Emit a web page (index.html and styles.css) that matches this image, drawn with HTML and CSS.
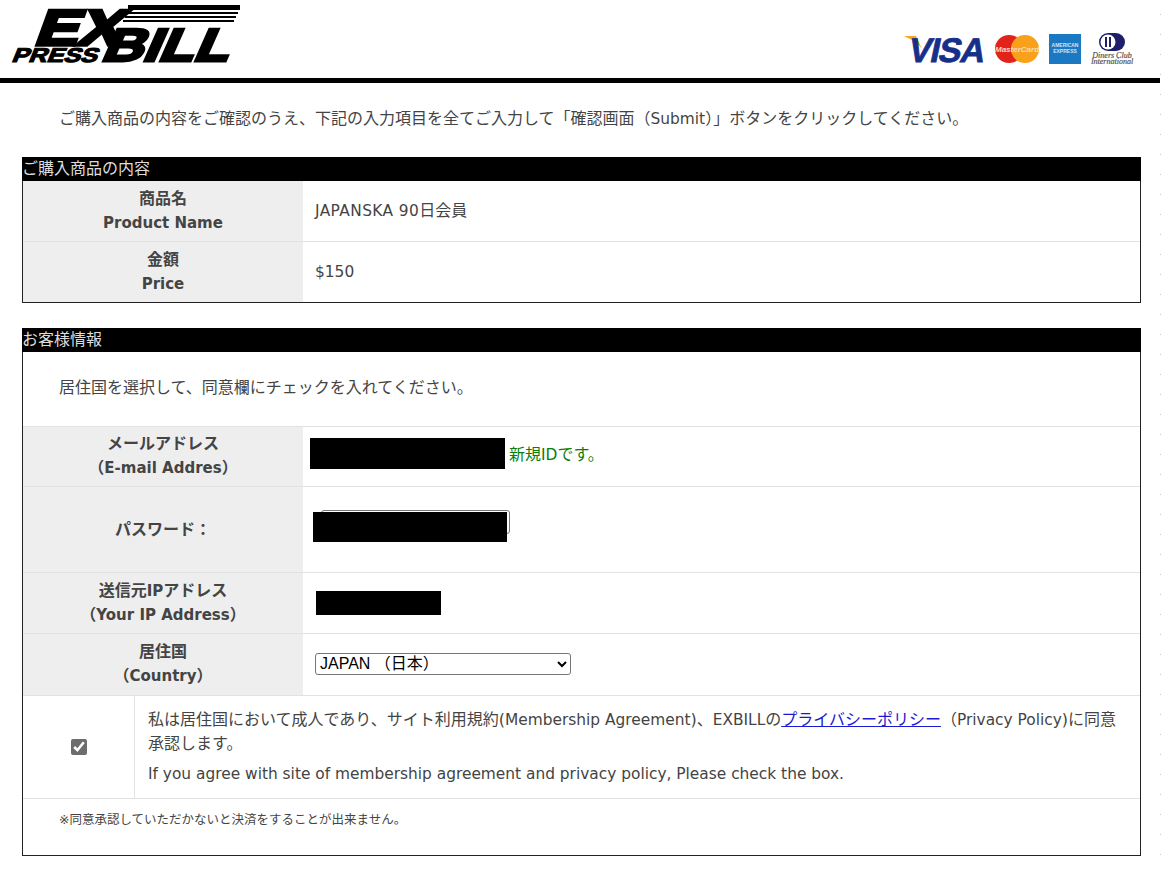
FILE: index.html

```html
<!DOCTYPE html>
<html lang="ja">
<head>
  <meta charset="UTF-8">
  <meta name="viewport" content="width=device-width, initial-scale=1.0"/>
  <title>EXPRESSBILL</title>
  <link rel="stylesheet" href="styles.css">
</head>
<body>
  <header class="header">
    <svg class="logo" width="250" height="70" viewBox="0 0 250 70">
      <g fill="#000">
        <rect x="128" y="5" width="112" height="5"/>
        <rect x="127" y="12" width="111" height="2"/>
        <rect x="125" y="16" width="111" height="2"/>
        <rect x="123" y="20" width="111" height="2"/>
      </g>
      <text class="logo-ex" transform="translate(33 45) skewX(-20) scale(1.3 1)">EX</text>
      <text class="logo-press" transform="translate(11 62) skewX(-22) scale(1.26 1)">PRESS</text>
      <text class="logo-bill" transform="translate(100 61) skewX(-24) scale(1.24 1)">BILL</text>
    </svg>
    <div class="cards">
      <svg class="card-visa" width="80" height="30" viewBox="0 0 80 30">
        <path d="M0 2 H12 L18 15 C14 9 7 5 0 2Z" fill="#f2a51f"/>
        <text class="visa" transform="translate(3 28) skewX(-12)">VISA</text>
      </svg>
      <svg width="44" height="28" viewBox="0 0 44 28">
        <circle cx="14" cy="14" r="14" fill="#e2231a"/>
        <circle cx="30" cy="14" r="14" fill="#f9a11b"/>
        <text class="mc" x="22" y="17">MasterCard</text>
      </svg>
      <svg width="32" height="30" viewBox="0 0 32 30">
        <rect width="32" height="30" fill="#1b78c2"/>
        <text class="amex" x="16" y="13">AMERICAN</text>
        <text class="amex" x="16" y="19">EXPRESS</text>
      </svg>
      <svg class="card-diners" width="42" height="32" viewBox="0 0 42 32">
        <path d="M17 0 H25 A9 9 0 0 1 25 18 H17 A9 9 0 0 1 17 0Z" fill="#1d1f6b"/>
        <circle cx="17" cy="9" r="7.5" fill="#fff"/>
        <rect x="14" y="4" width="2" height="10" fill="#1d1f6b"/>
        <rect x="18" y="4" width="2" height="10" fill="#1d1f6b"/>
        <text class="diners" x="21" y="25">Diners Club</text>
        <text class="diners" x="21" y="31">International</text>
      </svg>
    </div>
  </header>

  <p class="lead">ご購入商品の内容をご確認のうえ、下記の入力項目を全てご入力して「確認画面（<span class="en">Submit</span>）」ボタンをクリックしてください。</p>

  <section class="box">
    <h2 class="box-title">ご購入商品の内容</h2>
    <div class="row">
      <div class="label">商品名<br><span class="en">Product Name</span></div>
      <div class="value"><span><span class="en en-wide">JAPANSKA 90</span>日会員</span></div>
    </div>
    <div class="row">
      <div class="label">金額<br><span class="en">Price</span></div>
      <div class="value"><span class="en">$150</span></div>
    </div>
  </section>

  <section class="box box-customer">
    <h2 class="box-title">お客様情報</h2>
    <p class="intro">居住国を選択して、同意欄にチェックを入れてください。</p>
    <div class="row row-mail">
      <div class="label">メールアドレス<br>（<span class="en">E-mail Addres</span>）</div>
      <div class="value value-mail"><span class="mask mask-mail"></span><span class="ok">新規<span class="en">ID</span>です。</span></div>
    </div>
    <div class="row row-pass">
      <div class="label">パスワード：</div>
      <div class="value value-pass">
        <input class="pass-input" type="password">
        <span class="mask mask-pass"></span>
      </div>
    </div>
    <div class="row">
      <div class="label">送信元<span class="en">IP</span>アドレス<br>（<span class="en">Your IP Address</span>）</div>
      <div class="value"><span class="mask mask-ip"></span></div>
    </div>
    <div class="row row-country">
      <div class="label">居住国<br>（<span class="en">Country</span>）</div>
      <div class="value">
        <select class="country"><option>JAPAN （日本）</option></select>
      </div>
    </div>
    <div class="row row-agree">
      <div class="check-cell"><input type="checkbox" checked></div>
      <div class="agree-text">
        <p>私は居住国において成人であり、サイト利用規約(<span class="en">Membership Agreement</span>)、<span class="en">EXBILL</span>の<a href="#">プライバシーポリシー</a>（<span class="en">Privacy Policy</span>)に同意承認します。</p>
        <p class="agree-en en">If you agree with site of membership agreement and privacy policy, Please check the box.</p>
      </div>
    </div>
    <p class="note">※同意承認していただかないと決済をすることが出来ません。</p>
  </section>
</body>
</html>
```

FILE: styles.css

```css
html { overflow: hidden; }
body { margin: 0; width: 1161px; height: 871px; overflow: hidden; font-family: "DejaVu Sans", "Noto Sans CJK JP", sans-serif; font-size: 16px; line-height: 24px; color: #444; background: linear-gradient(#c4c4c4 1px, transparent 1px) right 14px / 1px 20px repeat-y; }
.en { font-size: 15.4px; }
.en-wide { letter-spacing: .4px; }

.header { display: flex; justify-content: space-between; width: 1160px; height: 78px; border-bottom: 5px solid #000; }
.logo { flex-shrink: 0; overflow: visible; }
.logo text { font-family: "Liberation Sans", sans-serif; font-weight: bold; fill: #000; stroke: #000; }
.logo-ex { font-size: 50px; stroke-width: 3.5px; }
.logo-press { font-size: 20px; stroke-width: 1.2px; }
.logo-bill { font-size: 46px; stroke-width: 3px; }

.cards { display: flex; align-items: center; gap: 10px; padding: 33px 27px 0 0; height: 32px; }
.cards svg { display: block; overflow: visible; }
.card-visa { margin-right: 1px; }
.visa { font-family: "Liberation Sans", sans-serif; font-size: 34px; font-weight: bold; letter-spacing: -1px; fill: #16308a; stroke: #16308a; stroke-width: .8px; }
.mc { font-family: "Liberation Sans", sans-serif; font-size: 8px; font-weight: bold; font-style: italic; fill: #fbd9c0; text-anchor: middle; }
.amex { font-family: "Liberation Sans", sans-serif; font-size: 5px; font-weight: bold; fill: #cfe4f5; text-anchor: middle; }
.diners { font-family: "Liberation Serif", serif; font-size: 8px; font-style: italic; fill: #555; stroke: #555; stroke-width: .2px; text-anchor: middle; }

.lead { margin: 0; padding: 24px 0 0 59px; }

.box { margin: 26px 20px 0 22px; border: solid #222; border-width: 0 1px 1px; }
.box-customer { margin-top: 25px; }
.box-title { margin: 0 -1px; height: 24px; background: #000; color: #ddd; font-size: 16px; font-weight: normal; line-height: 24px; }

.row { display: flex; height: 61px; box-sizing: border-box; border-top: 1px solid #e2e2e2; }
.box-title + .row { height: 60px; border-top: 0; }
.row-mail { height: 60px; }
.row-pass { height: 86px; }
.row-country { height: 62px; }
.label { width: 280px; flex-shrink: 0; padding-top: 6px; box-sizing: border-box; background: #eee; font-weight: bold; text-align: center; }
.label .en { font-size: 15px; }
.row-mail .label { padding-top: 5px; }
.row-pass .label { padding-top: 31px; }
.value { display: flex; align-items: center; flex: 1; padding-left: 12px; }
.value-mail { padding-bottom: 6px; }

.intro { margin: 0; height: 74px; padding: 24px 0 0 36px; box-sizing: border-box; }

.mask { display: block; background: #000; }
.mask-mail { width: 195px; height: 31px; margin-left: -5px; }
.mask-ip { width: 125px; height: 24px; margin-left: 1px; }
.ok { margin: 2px 0 0 4px; color: #0a7d0a; }

.value-pass { position: relative; }
.pass-input { width: 189px; height: 24px; box-sizing: border-box; margin: 0 0 16px 6px; border: 1px solid #777; border-radius: 3px; background: #fff; }
.mask-pass { position: absolute; left: 10px; top: 25px; width: 194px; height: 30px; }

.country { width: 256px; height: 22px; box-sizing: border-box; margin-top: -2px; padding: 0; border: 1px solid #767676; border-radius: 3px; background: #fff; color: #000; font-family: "Liberation Sans", "Noto Sans CJK JP", sans-serif; font-size: 16px; }

.row-agree { height: 103px; border-top: 1px solid #e2e2e2; }
.check-cell { display: flex; align-items: center; justify-content: center; width: 111px; flex-shrink: 0; border-right: 1px solid #e2e2e2; }
.check-cell input { width: 16px; height: 16px; margin: 0 0 0 1px; accent-color: #6d6d6d; }
.agree-text { flex: 1; padding: 12px 12px 0 13px; }
.agree-text p { margin: 0; }
.agree-text .agree-en { margin-top: 6px; }
.agree-text a { color: #1a1ad2; }

.note { margin: 0; height: 57px; padding: 9px 0 0 36px; box-sizing: border-box; border-top: 1px solid #e2e2e2; font-size: 12.5px; }
```
